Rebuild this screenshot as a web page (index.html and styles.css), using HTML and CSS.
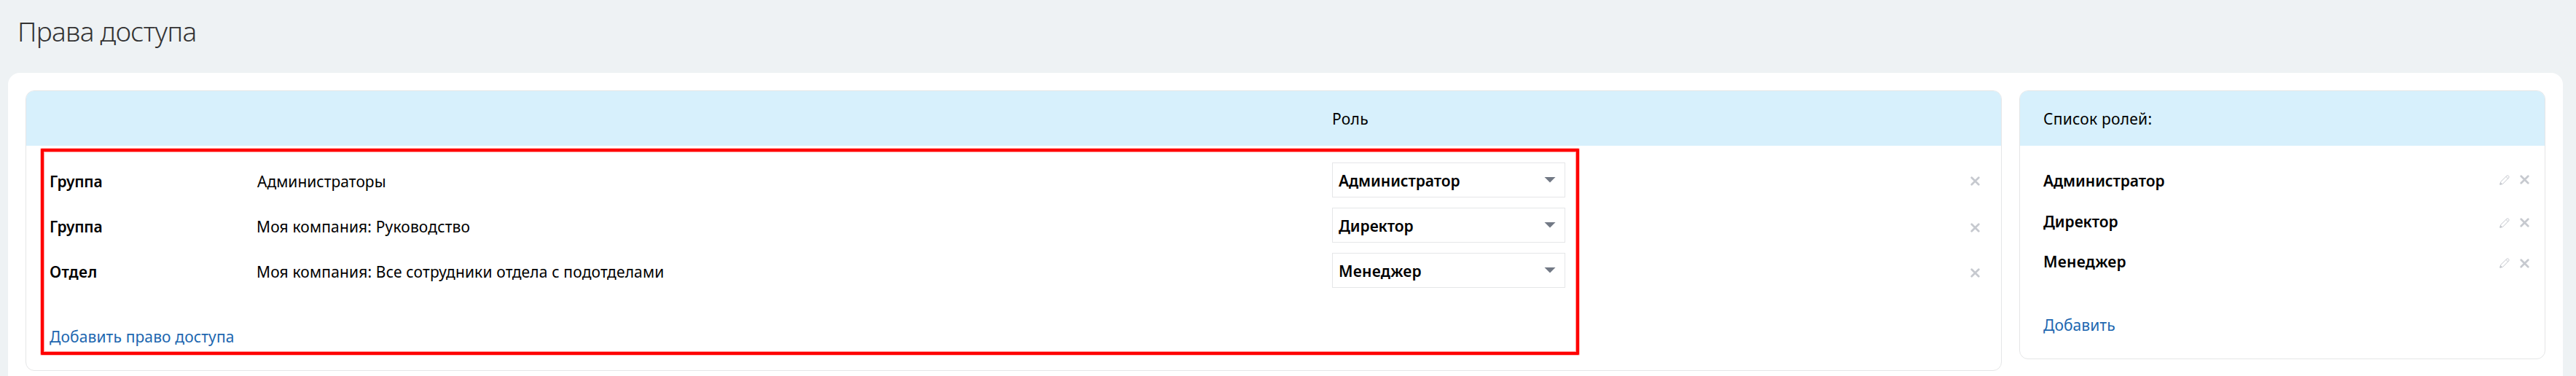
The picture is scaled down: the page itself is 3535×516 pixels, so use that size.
FILE: index.html
```
<!DOCTYPE html>
<html lang="ru">
<head>
<meta charset="utf-8">
<title>Права доступа</title>
<link rel="stylesheet" href="styles.css">
</head>
<body>
<svg class="defs" aria-hidden="true">
  <symbol id="close" viewBox="0 0 13 13"><path d="M1.7 1.7 11.3 11.3M11.3 1.7 1.7 11.3" fill="none" stroke="currentColor" stroke-width="2.7" stroke-linecap="round"/></symbol>
  <symbol id="pencil" viewBox="0 0 14 14"><path d="M.8 13.2 1.6 9.6 9.9 1.4Q11.2.3 12.5 1.5T12.6 4.1L4.4 12.4Z" fill="none" stroke="currentColor" stroke-width="1"/><path d="M.3 13.7 1.2 9.8 4.2 12.8Z" fill="currentColor"/><path d="M9 2.4 11.6 5" stroke="currentColor" stroke-width="1"/></symbol>
</svg>
<h1 class="title">Права доступа</h1>
<main class="sheet">
  <section class="panel rights">
    <header class="panel-head rights-head"><span class="t-role">Роль</span></header>
    <div class="rights-body">
      <div class="row">
        <b class="kind t-group">Группа</b><span class="name t-admins">Администраторы</span>
        <div class="select"><b class="t-admin">Администратор</b><i class="arrow"></i></div>
        <svg class="close"><use href="#close"/></svg>
      </div>
      <div class="row">
        <b class="kind t-group">Группа</b><span class="name">Моя компания: Руководство</span>
        <div class="select"><b class="t-director">Директор</b><i class="arrow"></i></div>
        <svg class="close"><use href="#close"/></svg>
      </div>
      <div class="row">
        <b class="kind t-dept">Отдел</b><span class="name t-staff">Моя компания: Все сотрудники отдела с подотделами</span>
        <div class="select"><b class="t-manager">Менеджер</b><i class="arrow"></i></div>
        <svg class="close"><use href="#close"/></svg>
      </div>
      <a class="add">Добавить право доступа</a>
    </div>
    <div class="highlight"></div>
  </section>
  <aside class="panel roles">
    <header class="panel-head roles-head"><span class="t-list">Список ролей:</span></header>
    <div class="roles-body">
      <div class="role"><b class="t-admin">Администратор</b><svg class="pencil"><use href="#pencil"/></svg><svg class="close"><use href="#close"/></svg></div>
      <div class="role"><b class="t-director">Директор</b><svg class="pencil"><use href="#pencil"/></svg><svg class="close"><use href="#close"/></svg></div>
      <div class="role"><b class="t-manager">Менеджер</b><svg class="pencil"><use href="#pencil"/></svg><svg class="close"><use href="#close"/></svg></div>
      <a class="add add-role">Добавить</a>
    </div>
  </aside>
</main>
</body>
</html>
```
FILE: styles.css
```
* { box-sizing: border-box; }
html, body { height: 100%; }
body {
  margin: 0;
  display: flex;
  flex-direction: column;
  overflow: hidden;
  background: #eef2f4;
  color: #000;
  font: 21px/30px "Noto Sans", "Open Sans", sans-serif;
  white-space: nowrap;
}
b { font-weight: 600; }
.defs { display: none; }
.title {
  margin: 0;
  padding-left: 24px;
  height: 100px;
  flex: none;
  font-size: 37px;
  font-weight: 300;
  line-height: 85px;
  letter-spacing: -.68px;
  color: #333;
}
.sheet {
  flex: 1;
  margin: 0 18px 0 11px;
  padding: 24px 24px 0;
  display: flex;
  align-items: flex-start;
  gap: 24px;
  background: #fff;
  border-radius: 16px 16px 0 0;
}
.panel {
  position: relative;
  border: 1px solid #e5e6e7;
  border-radius: 12px;
  background: #fff;
}
.rights { flex: 1; height: 385px; }
.roles { width: 722px; height: 369px; }
.panel-head {
  height: 75px;
  display: flex;
  align-items: center;
  background: #d7f0fc;
  border-radius: 11px 11px 0 0;
}
.rights-head { padding-left: 1792px; }
.roles-head { padding-left: 32px; }
.rights-body { padding: 16px 29px 0 32px; }
.row {
  height: 62px;
  display: grid;
  grid-template-columns: 284px 1476px 320px 1fr;
  align-items: center;
}
.kind { padding-top: 3px; }
.name { padding-top: 3px; letter-spacing: .14px; }
.select {
  height: 48px;
  padding: 0 12px 0 8px;
  display: flex;
  align-items: center;
  justify-content: space-between;
  border: 1px solid #e5e6e8;
}
.select b { padding-top: 2px; }
.arrow {
  width: 16px;
  height: 8px;
  margin-top: -1px;
  background: #727985;
  clip-path: polygon(0 0, 100% 0, 50% 100%);
}
.close { width: 13px; height: 13px; color: #c6c9cf; }
.row .close { justify-self: end; margin-top: 7px; }
.row:first-child .close { margin-top: 3px; }
.add { color: #2067b0; letter-spacing: .12px; }
.rights-body .add { display: block; padding-top: 45px; }
.highlight {
  position: absolute;
  left: 20px;
  top: 79px;
  width: 2111px;
  height: 283px;
  border: 4px solid #f00;
  border-radius: 1px;
  box-shadow: inset 0 0 0 1px #ff9a9a, 0 0 0 1px #ffc0c0;
}
.roles-body { padding: 20px 21px 0 32px; }
.role {
  height: 55.5px;
  display: flex;
  align-items: center;
}
.role b { flex: 1; padding-top: 1px; }
.pencil { width: 14px; height: 14px; color: #c6c9cf; margin: 5px 14px 0 0; }
.role .close { margin-top: 5px; }
.role:first-child svg { margin-top: -2px; }
.add-role { display: block; padding-top: 44px; letter-spacing: .08px; }
.t-role { letter-spacing: .3px; }
.t-list { letter-spacing: .23px; }
.t-group { letter-spacing: -.17px; }
.t-dept { letter-spacing: .43px; }
.t-admins { letter-spacing: .02px; padding-left: 1px; }
.t-staff { letter-spacing: .15px; }
.t-admin { letter-spacing: -.06px; }
.t-director { letter-spacing: -.05px; }
.t-manager { letter-spacing: .25px; }
```
